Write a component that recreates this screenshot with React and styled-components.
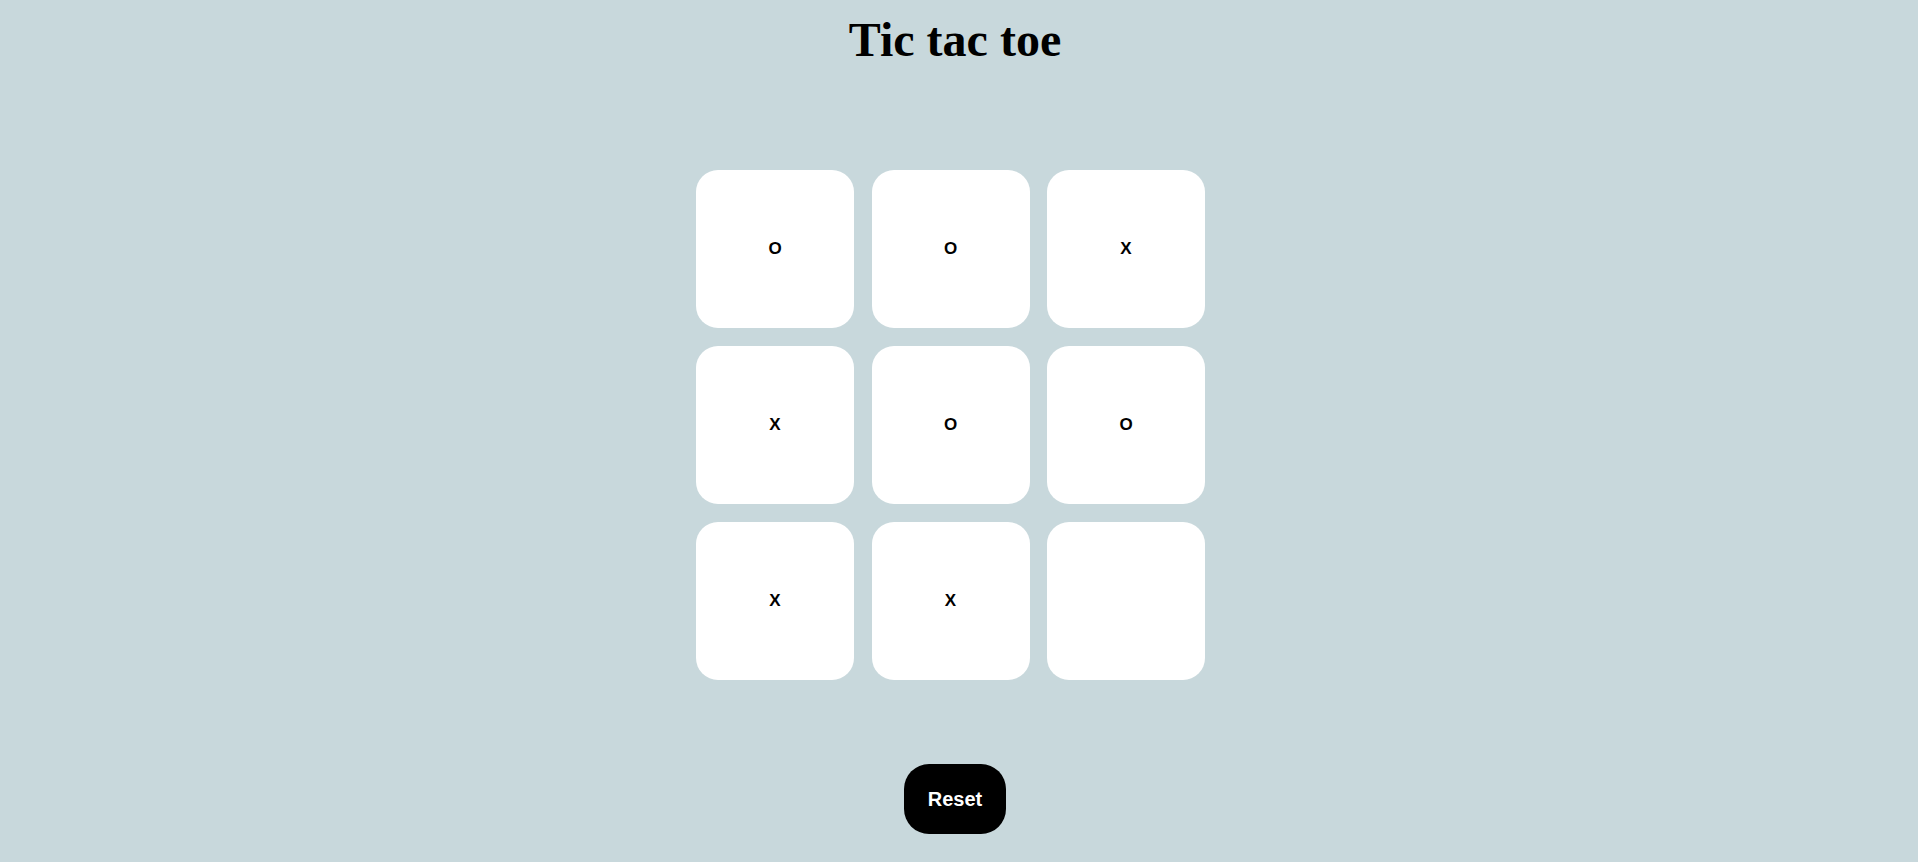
import styled, { createGlobalStyle } from "styled-components";

const GlobalStyle = createGlobalStyle`
  html, body {
    margin: 0;
    padding: 0;
    background: #c8d8dc;
  }
  body {
    font-family: "Liberation Sans", Arial, sans-serif;
  }
`;

const board = ["O", "O", "X", "X", "O", "O", "X", "X", ""];

export default function App() {
  return (
    <Page>
      <GlobalStyle />
      <Title>Tic tac toe</Title>
      <Board>
        {board.map((cell, i) => (
          <Cell key={i}>{cell}</Cell>
        ))}
      </Board>
      <ResetButton type="button">Reset</ResetButton>
    </Page>
  );
}

const Page = styled.div`
  min-height: 862px;
  padding: 12px 8px 0 0;
  box-sizing: border-box;
  display: flex;
  flex-direction: column;
  align-items: center;
`;

const Title = styled.h1`
  margin: 0;
  font-family: "Liberation Serif", "Times New Roman", serif;
  font-size: 48px;
  font-weight: bold;
  line-height: normal;
  color: #000;
`;

const Board = styled.div`
  display: grid;
  grid-template-columns: repeat(3, 158px);
  grid-auto-rows: 158px;
  column-gap: 17.5px;
  row-gap: 18px;
  margin: 103px 9px 0 0;
`;

const Cell = styled.div`
  background: #fff;
  border-radius: 22px;
  display: flex;
  align-items: center;
  justify-content: center;
  font-size: 17px;
  font-weight: bold;
  color: #000;
`;

const ResetButton = styled.button`
  margin-top: 84px;
  width: 102px;
  height: 70px;
  border: none;
  border-radius: 25px;
  background: #000;
  color: #fff;
  font-family: "Liberation Sans", Arial, sans-serif;
  font-size: 20px;
  font-weight: bold;
  cursor: pointer;
`;
